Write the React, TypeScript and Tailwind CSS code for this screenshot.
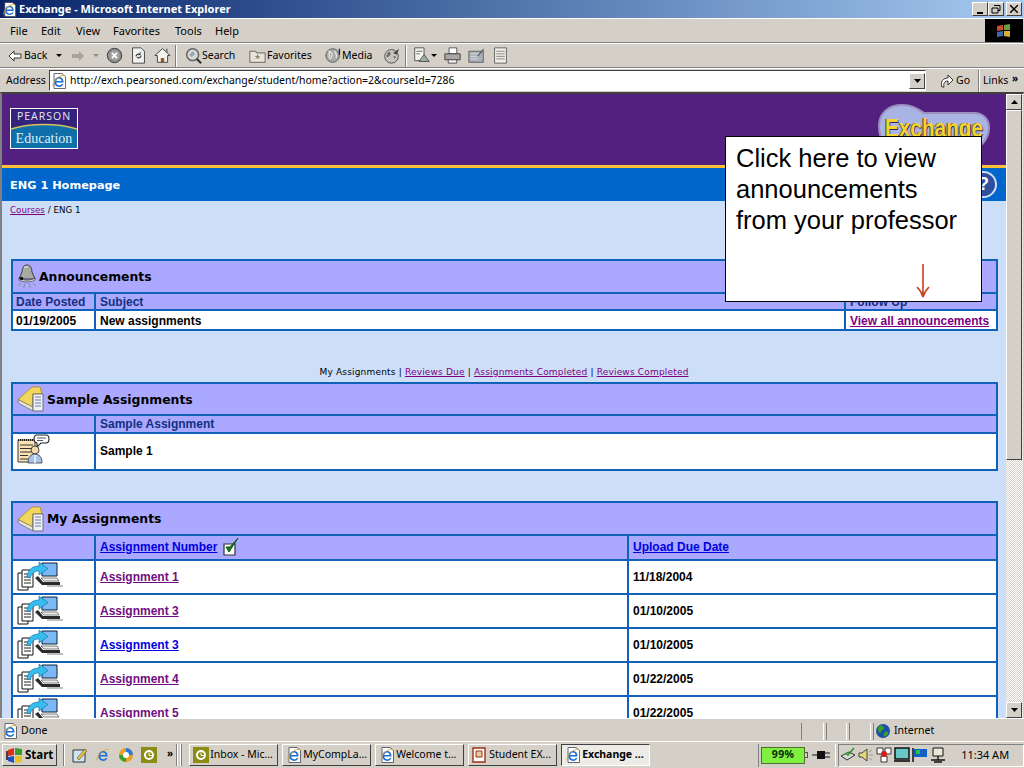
import type { ReactNode } from "react";

const LINE = "bg-[#0f62b8]";

function IeGlyph() {
  return (
    <>
      <path d="M12.500 9.500H5.200c.2 1.800 1.400 2.800 3 2.800 1.200 0 2.100-.5 2.700-1.400h1.500c-.8 1.900-2.400 3-4.300 3-2.700 0-4.800-2-4.800-4.800S5.400 4 8 4c2.800 0 4.700 2.200 4.500 5.500zM5.300 8h5.300C10.500 6.500 9.500 5.600 8 5.600S5.500 6.500 5.300 8z" fill="#1b70d4" />
      <path d="M2 13.500C1 11 5 5 9.500 3c2.200-1 4-.9 4.300.2" fill="none" stroke="#e2a92c" strokeWidth="0.900" />
    </>
  );
}

function IeIcon({ size = 16, page = true }: { size?: number; page?: boolean }) {
  return (
    <svg width={size} height={size} viewBox="0 0 16 16" className="shrink-0">
      {page && <path d="M3 .5h8l3.500 3v12H3z" fill="#fff" stroke="#445" strokeWidth="0.800" />}
      <IeGlyph />
    </svg>
  );
}

function BellIcon() {
  return (
    <svg width="20" height="26" viewBox="0 0 20 26" className="shrink-0">
      <path d="M10 1c4 0 4.500 3.500 5 7l3 7H2l3-7c.5-3.500 1-7 5-7z" fill="#a9a9a4" stroke="#222" strokeWidth="0.800" />
      <path d="M7 4c1-1.500 3-1.500 4-1" stroke="#eee" fill="none" />
      <path d="M2 14c4 3 12 3 16 0v2c-4 2.500-12 2.500-16 0z" fill="#f2f2f2" stroke="#222" strokeWidth="0.600" />
      <circle cx="4.500" cy="14.500" r="1.800" fill="#111" />
      <path d="M4 19l-3 3M8 19.500l-1.500 5M12 19.500l1.500 5M16 19l3 3" stroke="#8a9090" strokeWidth="1" />
    </svg>
  );
}

function BookIcon() {
  return (
    <svg width="28" height="26" viewBox="0 0 28 26" className="shrink-0">
      <path d="M1 13.500L15 1h8l2 7H16l-1 13z" fill="#f4d65c" stroke="#a8892a" strokeWidth="0.800" />
      <path d="M1 13.500l15 7.500v4L1.500 17z" fill="#ebe6d2" stroke="#6a6a5a" strokeWidth="0.700" />
      <path d="M16 8h10v17H16z" fill="#eef0f6" stroke="#556" strokeWidth="0.800" />
      <path d="M18 11h6M18 14h6M18 17h6M18 20h6" stroke="#6f80a8" strokeWidth="1.100" />
    </svg>
  );
}

function SpeakerIcon() {
  return (
    <svg width="34" height="30" viewBox="0 0 34 30" className="shrink-0">
      <path d="M1 6h17v22H1z" fill="#fbe3b4" stroke="#222" strokeWidth="0.900" />
      <path d="M1 6h17" stroke="#222" strokeWidth="2" strokeDasharray="1 1" />
      <path d="M3 11h13M3 14.500h13M3 18h11M3 21.500h8M3 25h8" stroke="#333" strokeWidth="1" />
      <path d="M20 1h9c4 0 4 8 0 8h-5l-4 4v-4c-4-.5-4-8 0-8z" fill="#fff" stroke="#222" strokeWidth="1.100" />
      <path d="M20 4h9M20 6.500h6" stroke="#445" strokeWidth="0.900" />
      <circle cx="18" cy="16" r="4" fill="#f2d9a8" stroke="#222" strokeWidth="0.800" />
      <path d="M11 29c0-6 3-9 7-9s7 3 7 9z" fill="#a8c4ea" stroke="#334" strokeWidth="0.800" />
      <path d="M18 21v8" stroke="#dde8f8" strokeWidth="2" />
    </svg>
  );
}

function SubmitIcon() {
  return (
    <svg width="46" height="30" viewBox="0 0 46 30" className="shrink-0">
      <path d="M25 2h15v13H25z" fill="#7cb8f4" stroke="#123" strokeWidth="1" />
      <path d="M21 15l5 6h17v3H25l-7-7z" fill="#2a2a2a" />
      <path d="M24 17h16l2 3H27z" fill="#eee" stroke="#333" strokeWidth="0.600" />
      <path d="M30 25h16" stroke="#a8a8a8" strokeWidth="1.500" />
      <path d="M1 12h10v17H1z" fill="#fff" stroke="#111" strokeWidth="1" />
      <path d="M5 9h11v17H5z" fill="#fff" stroke="#111" strokeWidth="1" />
      <path d="M7 13h7M7 16h7M7 19h7M7 22h7" stroke="#222" strokeWidth="1" />
      <path d="M10 16C11 7 17 5 22 5V1l9 6.500-9 6.500V10c-4 0-7 1.500-9 7z" fill="#35bdf0" stroke="#0e6a96" strokeWidth="0.600" />
    </svg>
  );
}

function CheckIcon() {
  return (
    <svg width="18" height="20" viewBox="0 0 18 20" className="shrink-0">
      <path d="M1 7h11v11H1z" fill="#fff" stroke="#333" strokeWidth="1.200" />
      <path d="M3 10l3 5 9-14-8 9z" fill="#157a1c" stroke="#0d5a12" strokeWidth="1" />
    </svg>
  );
}

function Globe({ size = 16 }: { size?: number }) {
  return (
    <svg width={size} height={size} viewBox="0 0 16 16" className="shrink-0">
      <circle cx="8" cy="8" r="7" fill="#1c4fa8" />
      <path d="M4 3c3-1 5 0 5 2S6 7 6 9s-3 0-3-2 0-3 1-4zM10 9c2-1 4 0 3 2s-3 3-4 2 0-3 1-4z" fill="#35a02c" />
    </svg>
  );
}

function CaptionButton({ children }: { children: ReactNode }) {
  return (
    <div className="flex h-[14px] w-4 items-center justify-center border border-t-white border-l-white border-r-[#404040] border-b-[#404040] bg-[#d4d0c8] text-black">
      {children}
    </div>
  );
}

function ToolIcon({ children, className = "" }: { children: ReactNode; className?: string }) {
  return <svg width="17" height="17" viewBox="0 0 20 20" className={`shrink-0 ${className}`}>{children}</svg>;
}

function Caret({ className = "", fill = "#000" }: { className?: string; fill?: string }) {
  return (
    <svg width="6" height="3" viewBox="0 0 6 3" className={`shrink-0 ${className}`}>
      <path d="M0 0h6L3 3z" fill={fill} />
    </svg>
  );
}

function Arrow({ up }: { up?: boolean }) {
  return (
    <div className="flex h-4 w-4 shrink-0 items-center justify-center border border-t-white border-l-white border-r-[#404040] border-b-[#404040] bg-[#d4d0c8]">
      <svg width="7" height="4" viewBox="0 0 7 4">
        <path d={up ? "M3.500 0L7 4H0z" : "M0 0h7L3.500 4z"} fill="#000" />
      </svg>
    </div>
  );
}

function TitleBar() {
  return (
    <div className="flex h-[18px] shrink-0 items-center bg-gradient-to-r from-[#0a246a] to-[#a6caf0] pr-[2px] pl-[2px]">
      <IeIcon size={15} />
      <span className="ml-[2px] flex-1 text-[11px] font-bold text-white">Exchange - Microsoft Internet Explorer</span>
      <div className="flex items-center">
        <CaptionButton>
          <span className="mt-[7px] h-[2px] w-[6px] bg-black" />
        </CaptionButton>
        <CaptionButton>
          <svg width="10" height="9" viewBox="0 0 10 9">
            <path d="M3 .5h6v5H7M1 3h6v5H1z" fill="none" stroke="#000" />
          </svg>
        </CaptionButton>
        <div className="ml-[2px]">
          <CaptionButton>
            <svg width="8" height="8" viewBox="0 0 8 8">
              <path d="M0 0l8 8M8 0L0 8" stroke="#000" strokeWidth="1.400" />
            </svg>
          </CaptionButton>
        </div>
      </div>
    </div>
  );
}

function MenuBar() {
  return (
    <div className="flex h-[25px] shrink-0 items-center border-t border-b border-t-white border-b-[#808080] bg-[#d4d0c8]">
      <div className="flex flex-1 pt-[1px] pl-[10px]">
        <span className="w-[31px]">File</span>
        <span className="w-[35px]">Edit</span>
        <span className="w-[37px]">View</span>
        <span className="w-[62px]">Favorites</span>
        <span className="w-[40px]">Tools</span>
        <span>Help</span>
      </div>
      <div className="mr-[1px] flex h-[23px] w-[38px] items-center justify-center bg-black">
        <svg width="16" height="14" viewBox="0 0 16 14">
          <path d="M1 2l6-1v5l-6 1z" fill="#c8502c" />
          <path d="M8 1l6-1v6H8z" fill="#6a9a3c" />
          <path d="M1 8l6-1v5l-6 1z" fill="#3c6ab0" />
          <path d="M8 7h6v6l-6-1z" fill="#d8b030" />
        </svg>
      </div>
    </div>
  );
}

function Toolbar() {
  return (
    <div className="flex h-[25px] shrink-0 items-center border-t border-b border-t-white border-b-[#808080] bg-[#d4d0c8] pl-[8px] text-[10.5px]">
      <svg width="14" height="12" viewBox="0 0 14 12" className="shrink-0">
        <path d="M6 1L1 6l5 5V8h7V4H6z" fill="#fff" stroke="#333" />
      </svg>
      <span className="ml-[2px] w-[25px] pt-[1px]">Back</span>
      <Caret className="ml-[7px]" />
      <svg width="14" height="12" viewBox="0 0 14 12" className="ml-[9px] shrink-0">
        <path d="M8 1l5 5-5 5V8H1V4h7z" fill="#a3a39e" />
      </svg>
      <Caret className="ml-[8px]" fill="#8a8a86" />
      <ToolIcon className="ml-[7px]">
        <circle cx="10" cy="10" r="8.500" fill="#8b8b8b" stroke="#333" />
        <circle cx="10" cy="10" r="6" fill="#a2a2a0" />
        <path d="M7 7l6 6M13 7l-6 6" stroke="#fff" strokeWidth="2" />
      </ToolIcon>
      <ToolIcon className="ml-[7px]">
        <path d="M3 1h10l4 4v14H3z" fill="#f2f2ee" stroke="#333" />
        <path d="M7 11a3 3 0 0 1 5-2M13 10a3 3 0 0 1-5 2" fill="none" stroke="#333" strokeWidth="1.300" />
        <path d="M12 6v3h-3" fill="none" stroke="#333" />
      </ToolIcon>
      <ToolIcon className="ml-[7px]">
        <path d="M1 10l9-8 9 8h-3v8H4v-8z" fill="#f5f5ef" stroke="#333" />
        <path d="M8 18v-5h4v5z" fill="#8a5a2a" />
        <path d="M14 2h2v5l-2-2z" fill="#777" />
      </ToolIcon>
      <div className="ml-[4px] h-[22px] w-[2px] shrink-0 border-r border-l border-r-white border-l-[#808080]" />
      <ToolIcon className="ml-[8px]">
        <circle cx="9" cy="9" r="7" fill="#d8d8d4" stroke="#666" strokeWidth="1.800" />
        <path d="M5 9l4-4 3 3-4 4z" fill="#9aa6b8" />
        <path d="M14 14l5 5" stroke="#333" strokeWidth="2.500" />
      </ToolIcon>
      <span className="w-[36px] pt-[1px]">Search</span>
      <ToolIcon className="ml-[11px]">
        <path d="M1 5h7l1 2h10v11H1z" fill="#e8e4d4" stroke="#555" />
        <path d="M10 8l1 2.500 2.500 0-2 1.500 1 2.500-2.500-1.500-2.500 1.500 1-2.500-2-1.500 2.500 0z" fill="#8a8a80" />
      </ToolIcon>
      <span className="ml-[1px] w-[46px] pt-[1px]">Favorites</span>
      <ToolIcon className="ml-[12px]">
        <circle cx="9" cy="10" r="8" fill="#a8a8a4" stroke="#555" />
        <path d="M5 5c3 1 4 3 3 6s-2 3-3 1zM11 5c2 2 3 5 2 8" stroke="#e8e8e8" strokeWidth="1.500" fill="none" />
        <path d="M17 2v7" stroke="#222" strokeWidth="1.500" />
      </ToolIcon>
      <span className="w-[30px] pt-[1px]">Media</span>
      <ToolIcon className="ml-[11px]">
        <circle cx="10" cy="11" r="8" fill="#c4c4c0" stroke="#444" />
        <path d="M6 6c3-1 4 2 2 4s-3 3-4 1M12 11c3-1 4 1 2 3" fill="#6f6f6a" />
        <path d="M12 7l7-5-3 7z" fill="#444" />
      </ToolIcon>
      <div className="ml-[5px] h-[22px] w-[2px] shrink-0 border-r border-l border-r-white border-l-[#808080]" />
      <ToolIcon className="ml-[6px]">
        <path d="M2 1h11v15H2z" fill="#f2f2ea" stroke="#444" />
        <path d="M4 5h7M4 8h4" stroke="#555" />
        <path d="M7 17l6-8 6 8z" fill="#9cb0a0" stroke="#444" />
      </ToolIcon>
      <Caret className="ml-[1px]" />
      <ToolIcon className="ml-[7px]">
        <path d="M6 1h9v7H6z" fill="#fff" stroke="#444" />
        <path d="M1 8h18v7H1z" fill="#a8a8a4" stroke="#333" />
        <path d="M5 15h10v4H5z" fill="#eee" stroke="#444" />
      </ToolIcon>
      <ToolIcon className="ml-[7px]">
        <path d="M1 5h17v13H1z" fill="#a8b0b8" stroke="#555" />
        <path d="M3 8h10M3 11h8M3 14h9" stroke="#e2e2e2" />
        <path d="M11 10l7-8 1 1-7 8z" fill="#555" />
      </ToolIcon>
      <ToolIcon className="ml-[7px]">
        <path d="M3 1h14v18H3z" fill="#eeeee6" stroke="#555" />
        <path d="M5 5h10M5 8h10M5 11h10M5 14h10" stroke="#777" />
      </ToolIcon>
    </div>
  );
}

function AddressBar() {
  return (
    <div className="flex h-[24px] shrink-0 items-center border-t border-t-white bg-[#d4d0c8] pl-[6px] text-[10.5px]">
      <span className="w-[43px]">Address</span>
      <div className="flex h-[21px] w-[877px] shrink-0 items-center border border-t-[#404040] border-l-[#404040] border-r-white border-b-white bg-white pl-[1px]">
        <IeIcon />
        <span className="ml-[3px] flex-1 text-[10.45px]">http://exch.pearsoned.com/exchange/student/home?action=2&amp;courseId=7286</span>
        <Arrow />
      </div>
      <svg width="16" height="16" viewBox="0 0 16 16" className="ml-[13px] shrink-0">
        <path d="M3 14c-2-5 1-9 6-9V2l5 5-5 5V8c-3 0-5 2-4 6z" fill="#fff" stroke="#333" />
      </svg>
      <span className="ml-[1px] w-[14px]">Go</span>
      <div className="ml-[8px] h-[22px] w-[2px] shrink-0 border-r border-l border-r-white border-l-[#808080]" />
      <span className="ml-[3px] w-[27px]">Links</span>
      <span className="ml-[2px] -translate-y-[2px] text-[10px] font-bold">»</span>
    </div>
  );
}

function PearsonLogo() {
  return (
    <div className="relative flex h-[41px] w-[68px] flex-col border border-white bg-[#0f6fa8] font-normal">
      <svg width="66" height="39" viewBox="0 0 66 39" className="absolute top-0 left-0">
        <path d="M0 0h66v20C46 14 20 14 0 20z" fill="#33237c" />
        <path d="M0 20c20-6 46-6 66 0" fill="none" stroke="#d8c458" strokeWidth="1.500" />
      </svg>
      <div className="relative flex h-[17px] items-center justify-center text-[10.5px] tracking-[1px] text-[#e8e4f0] [font-family:'Open_Sans',sans-serif]">
        PEARSON
      </div>
      <div className="relative flex flex-1 items-center justify-center pt-[3px] text-[14px] text-[#dff0fa] [font-family:'Liberation_Serif',serif]">
        Education
      </div>
    </div>
  );
}

function ExchangeLogo() {
  return (
    <div className="relative h-[46px] w-[112px]">
      <svg width="112" height="46" viewBox="0 0 112 46" className="absolute top-0 left-0">
        <path d="M1 22C1 8 12 1 24 1c12 0 17 5 22 8h50c10 0 15 7 15 15s-6 20-16 20H22C8 44 1 36 1 22z" fill="#a9b4e4" stroke="#9d8fc0" strokeWidth="2" />
      </svg>
      <div className="relative flex h-[46px] scale-x-[0.8] items-start justify-center pt-[10px] text-[26px] leading-[28px] font-bold whitespace-nowrap text-[#f4d42c] [font-family:'Liberation_Sans',sans-serif] [text-shadow:1px_1px_0_#33284f,-1px_0_0_#5a4a20]">
        Exchange
      </div>
    </div>
  );
}

function SectionTitle({ title, icon, gap }: { title: string; icon: ReactNode; gap: string }) {
  return (
    <div className={`col-span-full flex items-center bg-[#aaa8ff] pl-[4px] ${gap} text-[12.4px] font-bold text-black [font-family:'DejaVu_Sans',sans-serif]`}>
      {icon}
      <span className="pt-[2px]">{title}</span>
    </div>
  );
}

function HeadCell({ children, inset = "pl-[4px]" }: { children?: ReactNode; inset?: string }) {
  return <div className={`flex items-center bg-[#aaa8ff] text-[#12307f] ${inset}`}>{children}</div>;
}

function Cell({ children, inset = "pl-[4px]" }: { children?: ReactNode; inset?: string }) {
  return <div className={`flex items-center bg-white text-black ${inset}`}>{children}</div>;
}

type AssignmentRow = { name: string; due: string; visited: boolean };

const assignments: AssignmentRow[] = [
  { name: "Assignment 1", due: "11/18/2004", visited: true },
  { name: "Assignment 3", due: "01/10/2005", visited: true },
  { name: "Assignment 3", due: "01/10/2005", visited: false },
  { name: "Assignment 4", due: "01/22/2005", visited: true },
  { name: "Assignment 5", due: "01/22/2005", visited: true },
];

function PageBody() {
  return (
    <div className="h-full overflow-hidden bg-[#cddff8] text-[12px] font-bold [font-family:'Liberation_Sans',sans-serif]">
      <div className="flex h-[71px] items-start justify-between bg-[#52217f] pt-[14px] pr-[16px] pl-[8px]">
        <PearsonLogo />
        <div className="-mt-[4px]">
          <ExchangeLogo />
        </div>
      </div>
      <div className="h-[3px] bg-[#fbbf3a]" />
      <div className="flex h-[33px] items-center justify-between bg-[#0066cc] pr-[9px] pl-[8px]">
        <span className="pt-[4px] text-[11.3px] text-white [font-family:'DejaVu_Sans',sans-serif]">ENG 1 Homepage</span>
        <div className="flex h-[27px] w-[27px] items-center justify-center rounded-full border-2 border-[#cfe0f6] bg-[#2d4f9e] text-[18px] text-white">?</div>
      </div>

      <div className="ml-[8px] flex h-[18px] items-center pt-[2px] text-[8.7px] font-normal text-black [font-family:'DejaVu_Sans',sans-serif]">
        <a href="#" className="text-[#800080] underline">Courses</a>
        <span className="ml-[3px]">/ ENG 1</span>
      </div>

      <div className={`mt-[40px] mr-[8px] ml-[9px] grid grid-cols-[81px_748px_1fr] grid-rows-[31px_15px_18px] gap-[2px] p-[2px] ${LINE}`}>
        <SectionTitle title="Announcements" icon={<BellIcon />} gap="gap-[2px]" />
        <HeadCell inset="pl-[3px]">Date Posted</HeadCell>
        <HeadCell>Subject</HeadCell>
        <HeadCell>Follow Up</HeadCell>
        <Cell inset="pl-[3px] pt-[1px]">01/19/2005</Cell>
        <Cell inset="pl-[4px] pt-[1px]">New assignments</Cell>
        <Cell inset="pl-[4px] pt-[1px]">
          <a href="#" className="text-[#800080] underline">View all announcements</a>
        </Cell>
      </div>

      <div className="mt-[30px] flex h-[20px] items-center justify-center pt-[3px] pr-[8px] pl-[8px] text-[9px] font-normal tracking-[0.18px] text-black [font-family:'DejaVu_Sans',sans-serif]">
        <span>My Assignments |&nbsp;</span>
        <a href="#" className="text-[#800080] underline">Reviews Due</a>
        <span>&nbsp;|&nbsp;</span>
        <a href="#" className="text-[#800080] underline">Assignments Completed</a>
        <span>&nbsp;|&nbsp;</span>
        <a href="#" className="text-[#800080] underline">Reviews Completed</a>
      </div>

      <div className={`mt-[1px] mr-[8px] ml-[9px] grid grid-cols-[81px_1fr] grid-rows-[30px_16px_35px] gap-[2px] p-[2px] ${LINE}`}>
        <SectionTitle title="Sample Assignments" icon={<BookIcon />} gap="gap-[2px]" />
        <HeadCell />
        <HeadCell>Sample Assignment</HeadCell>
        <div className="bg-white pl-[4px]"><SpeakerIcon /></div>
        <Cell inset="pl-[4px] pb-[2px]">Sample 1</Cell>
      </div>

      <div className={`mt-[30px] mr-[8px] ml-[9px] grid grid-cols-[81px_531px_1fr] grid-rows-[31px_23px] auto-rows-[32px] gap-[2px] p-[2px] ${LINE}`}>
        <SectionTitle title="My Assignments" icon={<BookIcon />} gap="gap-[2px]" />
        <HeadCell />
        <div className="flex items-center gap-[6px] bg-[#aaa8ff] pb-[1px] pl-[4px]">
          <a href="#" className="text-[#0000e0] underline">Assignment Number</a>
          <CheckIcon />
        </div>
        <HeadCell inset="pl-[4px] pb-[1px]">
          <a href="#" className="text-[#0000e0] underline">Upload Due Date</a>
        </HeadCell>
        {assignments.map((row, i) => (
          <div key={i} className="contents">
            <div className="flex items-start bg-white pl-[4px]"><SubmitIcon /></div>
            <Cell>
              <a href="#" className={row.visited ? "text-[#6f0f7f] underline" : "text-[#0000e0] underline"}>{row.name}</a>
            </Cell>
            <Cell>{row.due}</Cell>
          </div>
        ))}
      </div>
    </div>
  );
}

function Scrollbar() {
  return (
    <div className="flex w-[17px] shrink-0 flex-col bg-[repeating-conic-gradient(#d4d0c8_0%_25%,#ffffff_0%_50%)] bg-[length:2px_2px]">
      <Arrow up />
      <div className="h-[350px] w-4 border border-t-white border-l-white border-r-[#404040] border-b-[#404040] bg-[#d4d0c8]" />
      <div className="flex-1" />
      <Arrow />
    </div>
  );
}

function StatusBar() {
  return (
    <div className="flex h-[23px] shrink-0 items-center border-t border-t-white bg-[#d4d0c8] pt-[2px] pl-[2px] text-[10.5px]">
      <IeIcon />
      <span className="ml-[3px] flex-1">Done</span>
      <div className="h-[17px] w-[23px] border-r border-l border-r-white border-l-[#808080]" />
      <div className="ml-[2px] h-[17px] w-[21px] border-r border-l border-r-white border-l-[#808080]" />
      <div className="ml-[2px] h-[17px] w-[22px] border-r border-l border-r-white border-l-[#808080]" />
      <div className="ml-[2px] flex h-[17px] w-[151px] items-center gap-[3px] border-l border-l-[#808080] pl-[1px]">
        <Globe />
        <span>Internet</span>
      </div>
    </div>
  );
}

function TaskButton({ label, icon, active }: { label: string; icon: ReactNode; active?: boolean }) {
  return (
    <div
      className={`flex h-[22px] w-[89px] shrink-0 items-center gap-[1px] border pl-[3px] whitespace-nowrap ${
        active
          ? "border-t-[#404040] border-l-[#404040] border-r-white border-b-white bg-[#ecebe6] font-bold"
          : "border-t-white border-l-white border-r-[#404040] border-b-[#404040]"
      }`}
    >
      {icon}
      <span>{label}</span>
    </div>
  );
}

function OutlookIcon({ size = 16 }: { size?: number }) {
  return (
    <svg width={size} height={size} viewBox="0 0 16 16" className="shrink-0">
      <path d="M0 0h16v16H0z" fill="#8c8c14" />
      <circle cx="8" cy="8" r="5" fill="#fff" />
      <circle cx="8" cy="8" r="3" fill="#8c8c14" />
      <path d="M8 5.500v3h3" stroke="#fff" fill="none" />
    </svg>
  );
}

function Taskbar() {
  return (
    <div className="flex h-[27px] shrink-0 items-center border-t border-t-white bg-[#d4d0c8] pl-[2px] text-[10.5px]">
      <div className="flex h-[22px] w-[55px] shrink-0 items-center gap-[2px] border border-t-white border-l-white border-r-[#404040] border-b-[#404040] pl-[3px] text-[11.5px] font-bold">
        <svg width="17" height="15" viewBox="0 0 17 15" className="shrink-0">
          <path d="M2 2l6-2v7l-6 1z" fill="#d8301c" />
          <path d="M9 0l7 1v6H9z" fill="#3a9a2c" />
          <path d="M2 9l6-1v7l-6-2z" fill="#1c50c8" />
          <path d="M9 8h7v6l-7 1z" fill="#e8c020" />
          <path d="M1 3v9" stroke="#111" strokeWidth="1.500" />
        </svg>
        <span>Start</span>
      </div>
      <div className="ml-[6px] h-[22px] w-[2px] shrink-0 border-r border-l border-r-white border-l-[#808080]" />
      <div className="ml-[7px] flex items-center gap-[7px]">
        <svg width="16" height="16" viewBox="0 0 16 16" className="shrink-0">
          <path d="M1 3h12v12H1z" fill="#cfe4f4" stroke="#333" />
          <path d="M5 11l8-9 2 2-8 9z" fill="#e8c040" stroke="#333" strokeWidth="0.500" />
        </svg>
        <IeIcon page={false} />
        <svg width="16" height="16" viewBox="0 0 16 16" className="shrink-0">
          <circle cx="8" cy="8" r="7" fill="#e8a020" />
          <path d="M8 1a7 7 0 0 1 7 7H8z" fill="#2c7ad8" />
          <path d="M8 15a7 7 0 0 1-7-7h7z" fill="#38a030" />
          <circle cx="8" cy="8" r="3" fill="#fff" />
        </svg>
        <OutlookIcon />
      </div>
      <span className="ml-[10px] -translate-y-[2px] text-[10px] font-bold">»</span>
      <div className="ml-[3px] h-[22px] w-[2px] shrink-0 border-r border-l border-r-white border-l-[#808080]" />
      <div className="ml-[2px] h-[22px] w-[2px] shrink-0 border-r border-l border-r-[#808080] border-l-white" />
      <div className="ml-[7px] flex gap-[4px]">
        <TaskButton label="Inbox - Mic..." icon={<OutlookIcon />} />
        <TaskButton label="MyCompLa..." icon={<IeIcon />} />
        <TaskButton label="Welcome t..." icon={<IeIcon />} />
        <TaskButton
          label="Student EX..."
          icon={
            <svg width="16" height="16" viewBox="0 0 16 16" className="shrink-0">
              <path d="M1 1h12v14H1z" fill="#fff" stroke="#a03010" strokeWidth="1.400" />
              <path d="M4 4h6v6H4z" fill="#e8c8a0" stroke="#a03010" />
            </svg>
          }
        />
        <TaskButton label="Exchange ..." icon={<IeIcon />} active />
      </div>
      <div className="ml-[108px] flex h-[23px] w-[78px] shrink-0 items-center border-r border-l border-r-white border-l-[#808080] pl-[2px]">
        <div className="flex h-[17px] w-[44px] items-center justify-center border border-[#507030] bg-[#80f040] font-bold tracking-[0.4px] text-[#0a2a0a]">99%</div>
        <div className="h-[6px] w-[3px] border border-l-0 border-[#555]" />
        <svg width="18" height="10" viewBox="0 0 18 10" className="ml-[4px] shrink-0">
          <path d="M0 5h5M13 3h5M13 7h5" stroke="#111" />
          <path d="M5 1h8v8H5z" fill="#111" />
        </svg>
      </div>
      <div className="ml-[2px] flex h-[23px] flex-1 items-center gap-[2px] border border-t-[#808080] border-l-[#808080] border-r-white border-b-white pl-[1px]">
        <svg width="16" height="16" viewBox="0 0 16 16" className="shrink-0">
          <path d="M1 9l8-4 6 3-8 5z" fill="#d8d8d4" stroke="#333" />
          <path d="M5 6l3 2 6-7" stroke="#1a9a24" strokeWidth="1.500" fill="none" />
        </svg>
        <svg width="16" height="16" viewBox="0 0 16 16" className="shrink-0">
          <path d="M1 6h3l5-4v12l-5-4H1z" fill="#e8d878" stroke="#444" />
          <path d="M11 5l3-2M11 8h4M11 11l3 2" stroke="#999" />
        </svg>
        <svg width="16" height="16" viewBox="0 0 16 16" className="shrink-0">
          <path d="M1 1h6v6H1zM9 1h6v6H9z" fill="#fff" stroke="#333" />
          <path d="M5 9h6v6H5z" fill="#fff" stroke="#333" />
          <circle cx="8" cy="7" r="3" fill="#d81c1c" />
        </svg>
        <svg width="16" height="16" viewBox="0 0 16 16" className="shrink-0">
          <path d="M1 1h14v11H1z" fill="#68c8c8" stroke="#111" strokeWidth="1.500" />
          <path d="M0 13h16v2H0z" fill="#333" />
        </svg>
        <svg width="16" height="16" viewBox="0 0 16 16" className="shrink-0">
          <path d="M2 2h13v8H2z" fill="#1060c8" />
          <path d="M4 3h4v4H4z" fill="#30c040" />
          <path d="M1 1v14" stroke="#111" strokeWidth="1.500" />
        </svg>
        <svg width="16" height="16" viewBox="0 0 16 16" className="shrink-0">
          <path d="M3 1h10v8H3z" fill="#e8e8d8" stroke="#111" />
          <path d="M1 13h14M8 9v4M4 15h8" stroke="#111" strokeWidth="1.400" />
        </svg>
        <span className="ml-[13px] whitespace-nowrap text-[11px]">11:34 AM</span>
      </div>
    </div>
  );
}

export default function App() {
  return (
    <div className="relative flex h-[768px] w-[1024px] flex-col overflow-hidden bg-[#d4d0c8] text-[11px] text-black [font-family:'Noto_Sans',sans-serif]">
      <TitleBar />
      <MenuBar />
      <Toolbar />
      <AddressBar />
      <div className="flex min-h-0 flex-1 border-t-2 border-r border-l-2 border-t-[#404040] border-r-[#d4d0c8] border-l-[#808080]">
        <div className="min-w-0 flex-1">
          <PageBody />
        </div>
        <Scrollbar />
      </div>
      <StatusBar />
      <Taskbar />

      {/* callout sits on top of the page */}
      <div className="absolute top-[136px] left-[725px] h-[166px] w-[257px] border border-black bg-white pt-[6px] pl-[10px] text-[25.5px] leading-[31px] [font-family:'Liberation_Sans',sans-serif]">
        <div>Click here to view</div>
        <div>announcements</div>
        <div>from your professor</div>
        <svg width="16" height="34" viewBox="0 0 16 34" className="absolute top-[127px] left-[189px]">
          <path d="M8 0v33M2 23c3 3 5 6 6 10 1-4 3-7 6-10" fill="none" stroke="#c8401c" strokeWidth="1.600" />
        </svg>
      </div>
    </div>
  );
}
